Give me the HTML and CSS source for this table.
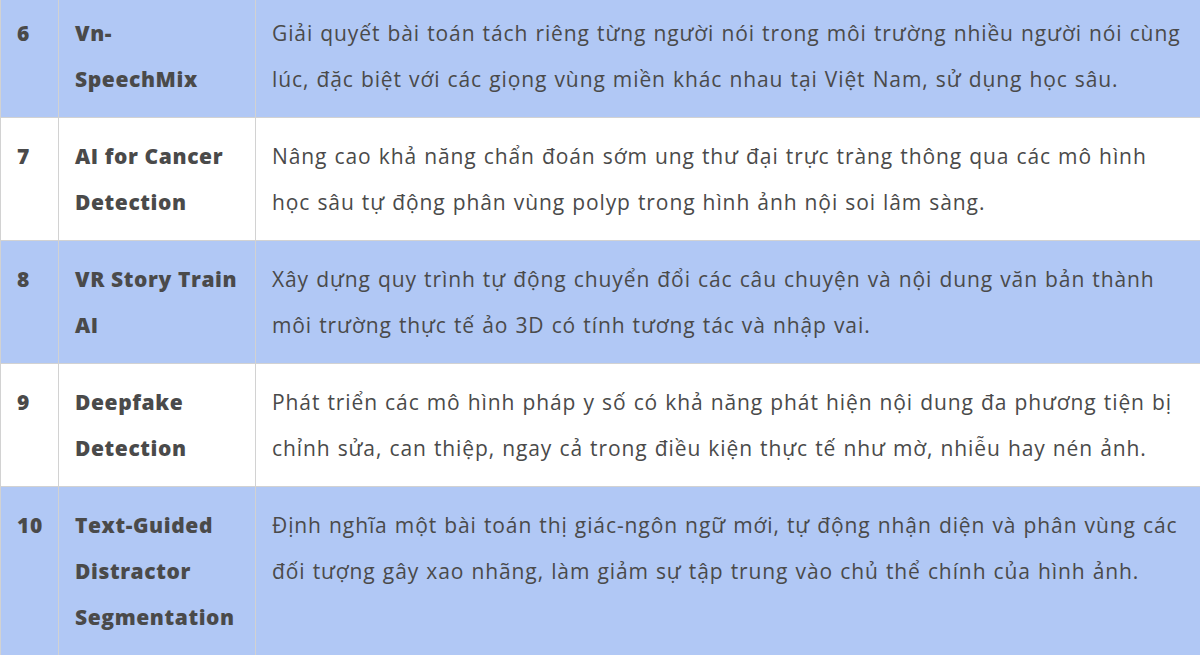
FILE: index.html
```html
<!DOCTYPE html>
<html lang="vi">
<head>
<meta charset="utf-8">
<title>Dự án</title>
<link rel="stylesheet" href="styles.css">
</head>
<body>
<table class="projects">
  <colgroup>
    <col class="c-no">
    <col class="c-name">
    <col class="c-desc">
  </colgroup>
  <tbody>
    <tr class="alt">
      <td class="no">6</td>
      <td class="name">Vn-<br>SpeechMix</td>
      <td class="desc">Giải quyết bài toán tách riêng từng người nói trong môi trường nhiều người nói cùng lúc, đặc biệt với các giọng vùng miền khác nhau tại Việt Nam, sử dụng học sâu.</td>
    </tr>
    <tr>
      <td class="no">7</td>
      <td class="name">AI for Cancer Detection</td>
      <td class="desc">Nâng cao khả năng chẩn đoán sớm ung thư đại trực tràng thông qua các mô hình học sâu tự động phân vùng polyp trong hình ảnh nội soi lâm sàng.</td>
    </tr>
    <tr class="alt">
      <td class="no">8</td>
      <td class="name">VR Story Train AI</td>
      <td class="desc">Xây dựng quy trình tự động chuyển đổi các câu chuyện và nội dung văn bản thành môi trường thực tế ảo 3D có tính tương tác và nhập vai.</td>
    </tr>
    <tr>
      <td class="no">9</td>
      <td class="name">Deepfake Detection</td>
      <td class="desc">Phát triển các mô hình pháp y số có khả năng phát hiện nội dung đa phương tiện bị chỉnh sửa, can thiệp, ngay cả trong điều kiện thực tế như mờ, nhiễu hay nén ảnh.</td>
    </tr>
    <tr class="alt">
      <td class="no">10</td>
      <td class="name">Text-Guided Distractor Segmentation</td>
      <td class="desc">Định nghĩa một bài toán thị giác-ngôn ngữ mới, tự động nhận diện và phân vùng các đối tượng gây xao nhãng, làm giảm sự tập trung vào chủ thể chính của hình ảnh.</td>
    </tr>
  </tbody>
</table>
</body>
</html>
```
FILE: styles.css
```css
html, body {
  margin: 0;
  padding: 0;
  background: #ffffff;
  overflow: hidden;
}

.projects {
  margin-top: -6px;
  width: 1205px;
  border-collapse: collapse;
  table-layout: fixed;
  font-family: "Open Sans", "Liberation Sans", sans-serif;
  font-size: 21px;
  line-height: 46px;
  letter-spacing: 0.9px;
  word-spacing: 0.8px;
  color: #4a4a4a;
}

.c-no { width: 58px; }
.c-name { width: 197px; }

.projects td {
  border: 1px solid #d2d2d2;
  padding: 15px 16px;
  vertical-align: top;
  text-align: left;
}

.projects tr.alt td {
  background: #b1c8f5;
}

.projects td.no,
.projects td.name {
  font-weight: 800;
  letter-spacing: 0.6px;
  word-spacing: 0;
}
```
